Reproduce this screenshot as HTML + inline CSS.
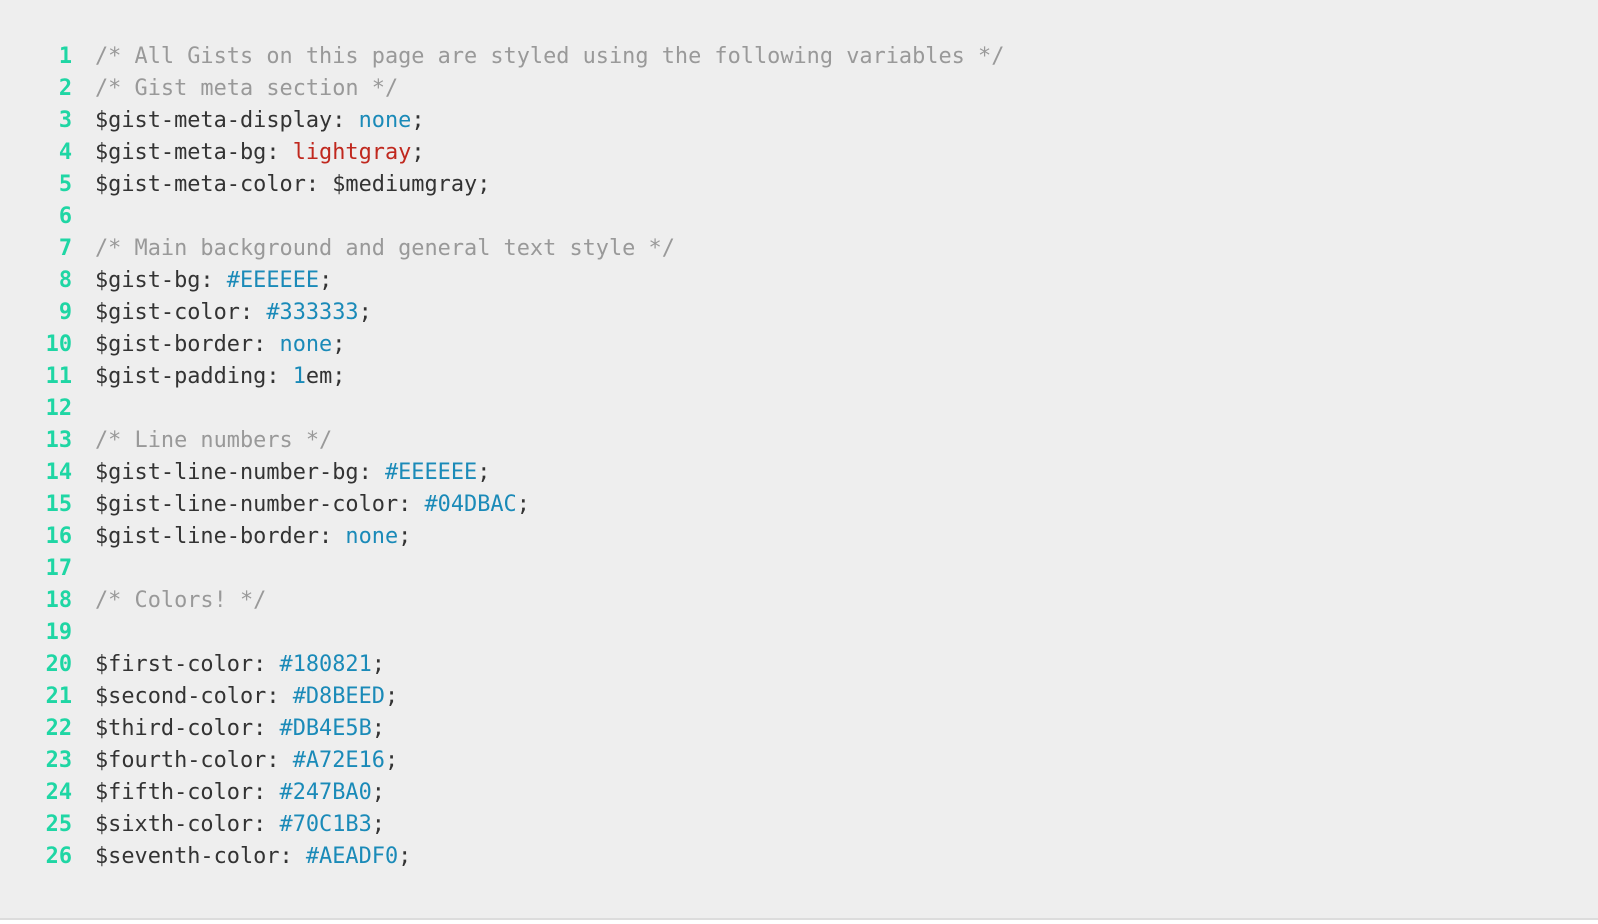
<!DOCTYPE html>
<html><head><style>
html,body{margin:0;padding:0;background:#fff;width:1598px;height:924px;overflow:hidden}
.box{position:absolute;left:0;top:0;width:1598px;height:918px;background:#eeeeee;border-bottom:2px solid #dcdcdc}
.code{position:absolute;left:2px;top:41px;font-family:"DejaVu Sans Mono","Liberation Mono",monospace;font-size:21.9px;color:#333}
.l{height:32px;line-height:32px;white-space:pre}
.ln{display:inline-block;width:70px;text-align:right;color:#1fd6a4;font-weight:bold;margin-right:23px}
.c{color:#999}.v{color:#1a8ab8}.r{color:#c0281e}
</style></head><body><div class="box"></div><div class="code">
<div class="l"><span class="ln">1</span><span class="c">/* All Gists on this page are styled using the following variables */</span></div>
<div class="l"><span class="ln">2</span><span class="c">/* Gist meta section */</span></div>
<div class="l"><span class="ln">3</span>$gist-meta-display: <span class="v">none</span>;</div>
<div class="l"><span class="ln">4</span>$gist-meta-bg: <span class="r">lightgray</span>;</div>
<div class="l"><span class="ln">5</span>$gist-meta-color: $mediumgray;</div>
<div class="l"><span class="ln">6</span></div>
<div class="l"><span class="ln">7</span><span class="c">/* Main background and general text style */</span></div>
<div class="l"><span class="ln">8</span>$gist-bg: <span class="v">#EEEEEE</span>;</div>
<div class="l"><span class="ln">9</span>$gist-color: <span class="v">#333333</span>;</div>
<div class="l"><span class="ln">10</span>$gist-border: <span class="v">none</span>;</div>
<div class="l"><span class="ln">11</span>$gist-padding: <span class="v">1</span>em;</div>
<div class="l"><span class="ln">12</span></div>
<div class="l"><span class="ln">13</span><span class="c">/* Line numbers */</span></div>
<div class="l"><span class="ln">14</span>$gist-line-number-bg: <span class="v">#EEEEEE</span>;</div>
<div class="l"><span class="ln">15</span>$gist-line-number-color: <span class="v">#04DBAC</span>;</div>
<div class="l"><span class="ln">16</span>$gist-line-border: <span class="v">none</span>;</div>
<div class="l"><span class="ln">17</span></div>
<div class="l"><span class="ln">18</span><span class="c">/* Colors! */</span></div>
<div class="l"><span class="ln">19</span></div>
<div class="l"><span class="ln">20</span>$first-color: <span class="v">#180821</span>;</div>
<div class="l"><span class="ln">21</span>$second-color: <span class="v">#D8BEED</span>;</div>
<div class="l"><span class="ln">22</span>$third-color: <span class="v">#DB4E5B</span>;</div>
<div class="l"><span class="ln">23</span>$fourth-color: <span class="v">#A72E16</span>;</div>
<div class="l"><span class="ln">24</span>$fifth-color: <span class="v">#247BA0</span>;</div>
<div class="l"><span class="ln">25</span>$sixth-color: <span class="v">#70C1B3</span>;</div>
<div class="l"><span class="ln">26</span>$seventh-color: <span class="v">#AEADF0</span>;</div>
</div></body></html>
